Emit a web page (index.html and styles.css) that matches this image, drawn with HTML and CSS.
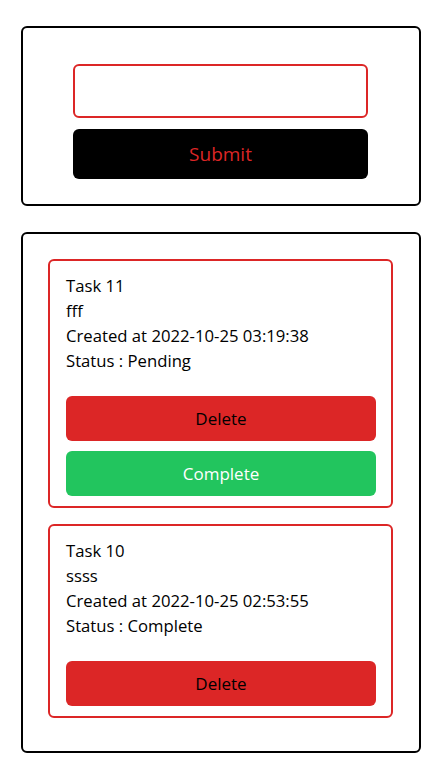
FILE: index.html
```html
<!DOCTYPE html>
<html>
<head>
<meta charset="utf-8">
<link rel="stylesheet" href="styles.css">
</head>
<body>
<main class="page">
  <section class="panel form-panel">
    <form class="task-form">
      <input class="task-input" type="text">
      <button class="submit-btn" type="button">Submit</button>
    </form>
  </section>
  <section class="panel list-panel">
    <div class="task-card">
      <p class="line">Task 11</p>
      <p class="line">fff</p>
      <p class="line">Created at 2022-10-25 03:19:38</p>
      <p class="line">Status : Pending</p>
      <div class="actions">
        <button class="btn btn-delete" type="button">Delete</button>
        <button class="btn btn-complete" type="button">Complete</button>
      </div>
    </div>
    <div class="task-card">
      <p class="line">Task 10</p>
      <p class="line">ssss</p>
      <p class="line">Created at 2022-10-25 02:53:55</p>
      <p class="line">Status : Complete</p>
      <div class="actions">
        <button class="btn btn-delete" type="button">Delete</button>
      </div>
    </div>
  </section>
</main>
</body>
</html>
```

FILE: styles.css
```css
* { box-sizing: border-box; }
html, body { margin: 0; padding: 0; background: #fff; }
body {
  font-family: "Open Sans", "Noto Sans", sans-serif;
  color: #000;
}
.page {
  width: 400px;
  margin: 0 auto;
  padding-top: 26px;
  display: flex;
  flex-direction: column;
  gap: 26px;
}
.panel {
  border: 2px solid #000;
  border-radius: 6px;
}
.form-panel {
  padding: 36px 51px 25px 50px;
}
.task-form {
  display: flex;
  flex-direction: column;
  gap: 11px;
}
.task-input {
  height: 54px;
  width: 100%;
  border: 2px solid #dc2626;
  border-radius: 6px;
  outline: none;
  font: inherit;
}
.submit-btn {
  height: 50px;
  width: 100%;
  background: #000;
  color: #dc2626;
  border: none;
  border-radius: 6px;
  font-family: inherit;
  font-size: 19px;
}
.list-panel {
  padding: 25px 26px 33px 25px;
  display: flex;
  flex-direction: column;
  gap: 16px;
}
.task-card {
  border: 2px solid #dc2626;
  border-radius: 6px;
  padding: 12px 15px 10px 16px;
}
.line {
  margin: 0;
  font-size: 16.7px;
  line-height: 25px;
}
.actions {
  margin-top: 23px;
  display: flex;
  flex-direction: column;
  gap: 10px;
}
.btn {
  height: 45px;
  width: 100%;
  border: none;
  border-radius: 6px;
  font-family: inherit;
  font-size: 17px;
}
.btn-delete { background: #dc2626; color: #000; }
.btn-complete { background: #22c55e; color: #fff; }
```
